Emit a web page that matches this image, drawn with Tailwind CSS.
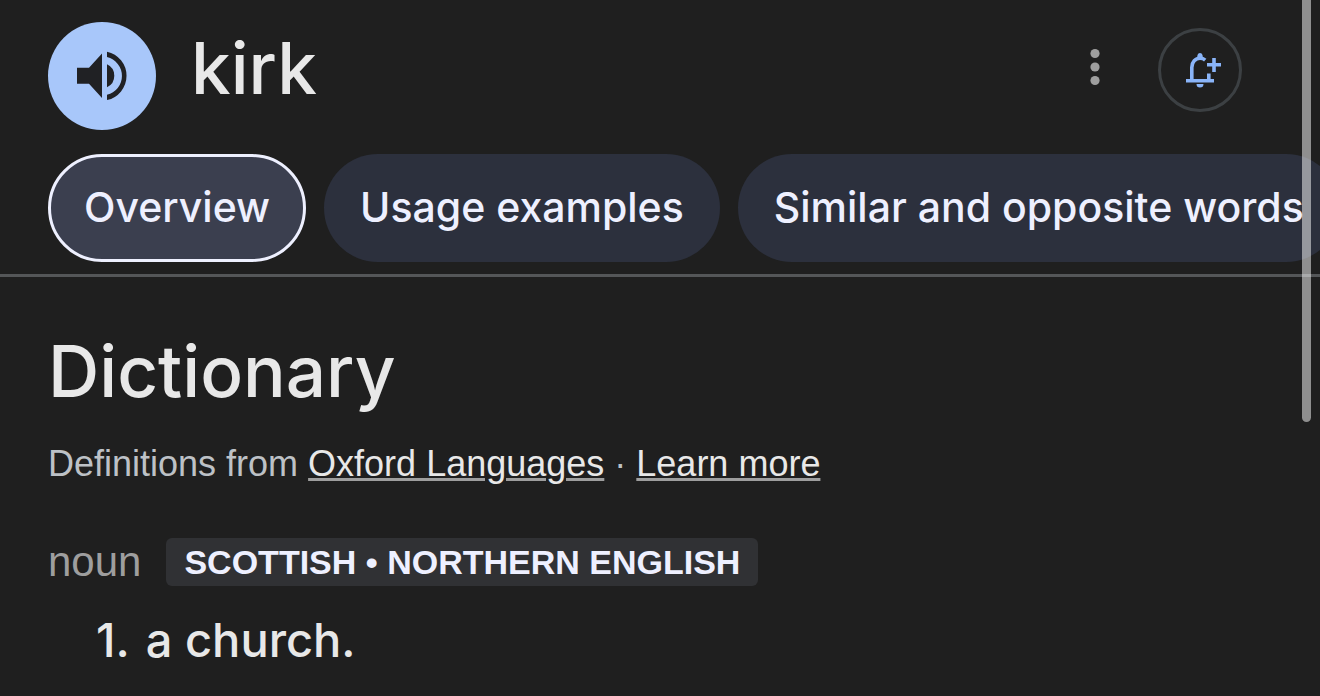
<!DOCTYPE html>
<html lang="en">
<head>
<meta charset="utf-8">
<meta name="viewport" content="width=device-width, initial-scale=1">
<title>kirk</title>
<script src="https://cdn.jsdelivr.net/npm/@tailwindcss/browser@4"></script>
</head>
<body class="relative min-h-screen overflow-hidden bg-[#1f1f1f] font-['Inter',sans-serif] text-[#e8e8e8]">
<header class="border-b-3 border-[#545658] pb-3">
  <div class="flex items-center pt-[22px] pr-[78px] pl-12">
    <button type="button" aria-label="Listen to pronunciation" class="flex size-[108px] shrink-0 items-center justify-center rounded-full bg-[#a8c7fa]">
      <svg class="size-[64px]" viewBox="0 0 64 64" fill="#202124" aria-hidden="true">
        <path d="M7 23.700h12L32 9.500v44.500L19 39.700H7z"/>
        <path d="M37 20.300a12.700 12.700 0 0 1 0 23z"/>
        <path d="M37 7.700a24.700 24.700 0 0 1 0 48.300v-5.300a19.300 19.300 0 0 0 0-37.600z"/>
      </svg>
    </button>
    <h1 class="mb-4 ml-[35px] flex-1 text-[71px] leading-20 font-medium">kirk</h1>
    <button type="button" aria-label="More options" class="mb-[18px] flex w-12 justify-center">
      <svg class="h-12 w-4" viewBox="0 0 16 48" fill="#9e9e9e" aria-hidden="true"><circle cx="8" cy="10.500" r="4.600"/><circle cx="8" cy="24" r="4.600"/><circle cx="8" cy="37.500" r="4.600"/></svg>
    </button>
    <button type="button" aria-label="Follow" class="mb-3 ml-[39px] flex size-[84px] items-center justify-center rounded-full border-3 border-[#3c4043]">
      <svg class="size-[42px]" viewBox="0 0 42 42" fill="none" stroke="#8ab4f8" stroke-width="3.600" aria-hidden="true">
        <path d="M7 31.700h28M12.800 31V18.500C12.800 13 16.500 9.300 21 9.300c2 0 3.800.600 5.200 1.800M29.800 31v-6.500M35 9v14M28 15.800h14"/>
        <path d="M18 9.500l.5-3.500a2.600 2.600 0 0 1 5 0l.5 3.500zM17.500 35h7a3.500 3.500 0 0 1-7 0z" fill="#8ab4f8" stroke="none"/>
      </svg>
    </button>
  </div>
  <nav aria-label="Sections" class="mt-6 flex gap-[18px] overflow-hidden pl-12 text-[41px] leading-[48px] font-medium whitespace-nowrap text-[#eef0ff]">
    <a href="#overview" aria-current="page" class="flex h-[108px] shrink-0 items-center rounded-full border-3 border-[#eef0ff] bg-[#3b3f4f] px-[33px] pb-0.5">Overview</a>
    <a href="#examples" class="flex h-[108px] shrink-0 items-center rounded-full bg-[#2c303d] px-9 pb-0.5">Usage examples</a>
    <a href="#similar" class="flex h-[108px] shrink-0 items-center rounded-full bg-[#2c303d] px-9 pb-0.5">Similar and opposite words</a>
  </nav>
</header>
<main id="overview" class="px-12 pt-[52px]">
  <h2 class="text-[71px] leading-[84px] font-medium">Dictionary</h2>
  <p class="mt-[27px] font-['Liberation_Sans',sans-serif] text-[36px] leading-[48px] text-[#bdc1c6]">Definitions from <a href="#oxford" class="text-[#e8e8e8] underline decoration-[#9e9e9e] decoration-3 underline-offset-2">Oxford Languages</a> · <a href="#learn" class="text-[#e8e8e8] underline decoration-[#9e9e9e] decoration-3 underline-offset-2">Learn more</a></p>
  <div class="mt-[50px] flex items-center gap-[25px] font-['Liberation_Sans',sans-serif]">
    <span class="text-[42px] leading-[48px] text-[#9e9e9e]">noun</span>
    <span class="rounded-md bg-[#303134] px-[18px] text-[34px] leading-[48px] font-bold text-[#eef0ff]">SCOTTISH • NORTHERN ENGLISH</span>
  </div>
  <ol class="mt-6 text-[47px] leading-[60px] font-medium">
    <li class="flex gap-4 pl-12"><span>1.</span><span>a church.</span></li>
  </ol>
</main>
<div class="absolute top-0 right-[9px] h-[422px] w-[9px] rounded-b-full bg-white/50" aria-hidden="true"></div>
</body>
</html>
